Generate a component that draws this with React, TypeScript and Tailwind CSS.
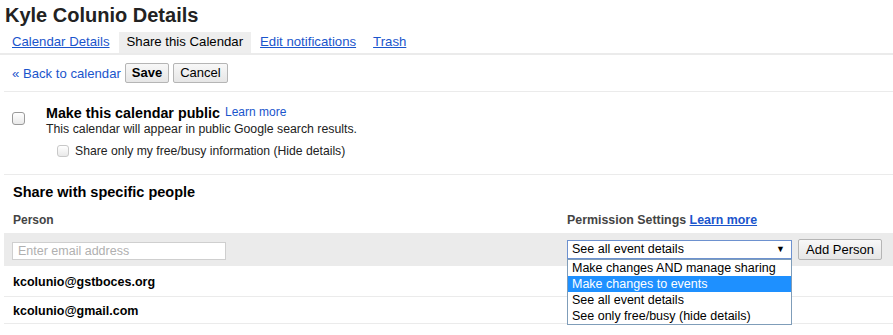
const LINK = 'text-[#1a55cc]';

function Checkbox({ size, faded }: { size: number; faded?: boolean }) {
  return (
    <span
      className={`inline-block shrink-0 rounded-[3px] border bg-gradient-to-b from-white to-[#e9e9e9] ${
        faded ? 'border-[#c8c8c8]' : 'border-[#9a9a9a]'
      } ${size === 13 ? 'h-[13px] w-[13px]' : 'h-[12px] w-[12px]'}`}
    />
  );
}

export default function App() {
  const options = [
    'Make changes AND manage sharing',
    'Make changes to events',
    'See all event details',
    'See only free/busy (hide details)',
  ];

  return (
    <div className="relative h-[335px] w-[893px] overflow-hidden bg-white font-['Liberation_Sans',Arial,sans-serif] text-[#222]">
      {/* Page title */}
      <h1 className="pl-[5px] pt-[3px] pb-[5px] text-[20px] font-bold leading-[24px] text-[#222]">
        Kyle Colunio Details
      </h1>

      {/* Tabs */}
      <div className="flex gap-px border-b-2 border-[#ebebeb] pl-[4px] text-[13.2px]">
        <a className={`px-2 pt-[2px] pb-[4px] leading-[15px] underline ${LINK}`}>Calendar Details</a>
        <span className="bg-[#eeeeee] px-2 pt-[2px] pb-[4px] leading-[15px] text-black">Share this Calendar</span>
        <a className={`px-2 pt-[2px] pb-[4px] leading-[15px] underline ${LINK}`}>Edit notifications</a>
        <a className={`px-2 pt-[2px] pb-[4px] leading-[15px] underline ${LINK}`}>Trash</a>
      </div>

      {/* Back / Save / Cancel */}
      <div className="ml-[4px] flex h-[37px] items-center gap-[4px] border-b border-[#ebebeb] pl-[8px] text-[13px]">
        <a className={`${LINK} text-[13.15px] leading-[15px]`}>« Back to calendar</a>
        <button className="h-[20px] rounded-[2px] border border-[#b5b5b5] bg-gradient-to-b from-[#f8f8f8] to-[#e6e6e6] px-[6px] text-[13px] font-bold leading-[16px] text-black">
          Save
        </button>
        <button className="h-[20px] rounded-[2px] border border-[#b5b5b5] bg-gradient-to-b from-[#f8f8f8] to-[#e6e6e6] px-[6px] text-[13px] leading-[16px] text-black">
          Cancel
        </button>
      </div>

      {/* Public calendar */}
      <div className="ml-[4px] flex h-[83px] border-b border-[#ebebeb] pl-[8px]">
        <div className="pt-[16px]">
          <Checkbox size={13} />
        </div>
        <div className="ml-[21px] pt-[13px]">
          <div className="flex items-start">
            <span className="text-[14.3px] font-bold leading-[17px] text-black">Make this calendar public</span>
            <a className={`ml-[5px] text-[12px] leading-[14px] ${LINK}`}>Learn more</a>
          </div>
          <p className="text-[12.3px] leading-[14px]">This calendar will appear in public Google search results.</p>
          <div className="ml-[11px] mt-[8px] flex items-center gap-[6px]">
            <Checkbox size={12} faded />
            <span className="text-[12.2px] leading-[14px]">Share only my free/busy information (Hide details)</span>
          </div>
        </div>
      </div>

      {/* Share with specific people */}
      <div className="ml-[4px] pt-[9px]">
        <h2 className="pl-[9px] text-[14.5px] font-bold leading-[17px] text-black">Share with specific people</h2>
        <div className="mt-[12px] flex pb-[6px] text-[12px] font-bold leading-[14px] text-[#444]">
          <div className="w-[563px] pl-[9px]">Person</div>
          <div className="text-[12.4px]">
            Permission Settings <a className={`underline ${LINK}`}>Learn more</a>
          </div>
        </div>

        <div className="flex h-[33px] items-center bg-[#ebebeb]">
          <div className="w-[563px] pl-[8px]">
            <input
              placeholder="Enter email address"
              className="h-[18px] w-[214px] border border-[#cfcfcf] bg-white px-[5px] text-[12.5px] leading-[16px] placeholder:text-[#b0b0b0] outline-none"
            />
          </div>
          <div className="flex h-[19px] w-[225px] items-center justify-between border border-[#6d91cf] bg-white pl-[4px] pr-[6px] text-[12.5px] leading-[15px] text-black">
            <span>See all event details</span>
            <span className="text-[9px] leading-[9px]">▼</span>
          </div>
          <button className="ml-[6px] h-[21px] rounded-[2px] border border-[#b5b5b5] bg-gradient-to-b from-[#f8f8f8] to-[#e6e6e6] px-[7px] text-[13px] leading-[16px] text-black">
            Add Person
          </button>
        </div>

        <div className="h-[31px] border-b border-[#ebebeb] pl-[9px] pt-[9px] text-[12.5px] font-bold leading-[15px] text-black">
          kcolunio@gstboces.org
        </div>
        <div className="h-[27px] border-b border-[#ebebeb] pl-[9px] pt-[7px] text-[12.5px] font-bold leading-[15px] text-black">
          kcolunio@gmail.com
        </div>
      </div>

      {/* Open select list */}
      <ul className="absolute left-[567px] top-[259px] w-[225px] border border-[#7f9db9] bg-white text-[12.5px] leading-[16px] text-black">
        {options.map((o, i) => (
          <li key={o} className={`h-[16px] pl-[4px] ${i === 1 ? 'bg-[#1e90ff] text-white' : ''}`}>
            {o}
          </li>
        ))}
      </ul>
    </div>
  );
}
